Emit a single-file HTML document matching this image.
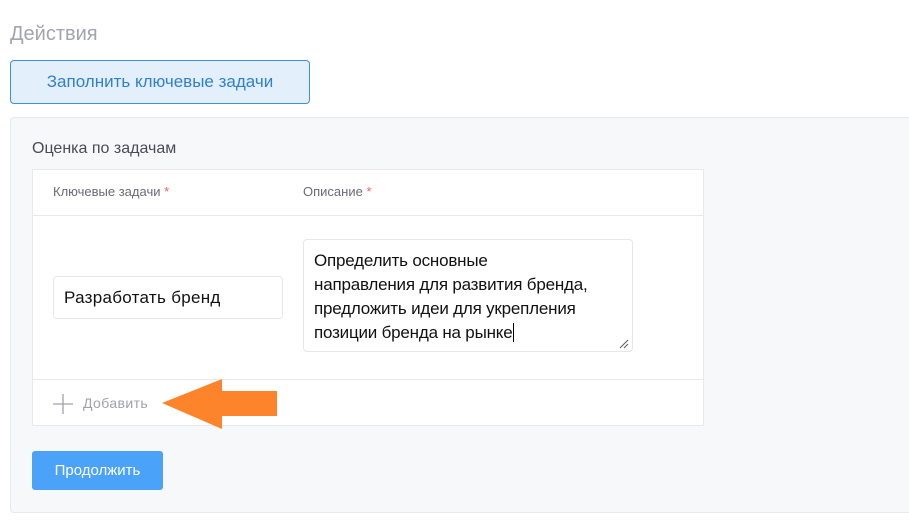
<!DOCTYPE html>
<html><head><meta charset="utf-8"><style>
*{box-sizing:border-box;margin:0;padding:0}
body{width:909px;height:521px;background:#fff;font-family:"Liberation Sans","Noto Sans CJK SC",sans-serif;position:relative;overflow:hidden}
.a{position:absolute}
</style></head><body>
<div class="a" style="left:10px;top:23px;font-size:20px;color:#a3a3b3">Действия</div>
<div class="a" style="left:10px;top:60px;width:300px;height:44px;background:#e3f0fc;border:1px solid #3d8fe3;border-radius:4px;color:#2f7fd3;font-size:17px;line-height:42px;text-align:center">Заполнить ключевые задачи</div>
<div class="a" style="left:10px;top:117px;width:910px;height:396px;background:#f7f8fa;border:1px solid #e8e9ed;border-radius:4px"></div>
<div class="a" style="left:32px;top:140px;font-size:16px;color:#4a4a5a">Оценка по задачам</div>
<div class="a" style="left:32px;top:169px;width:672px;height:257px;background:#fff;border:1px solid #e8e9ed"></div>
<div class="a" style="left:33px;top:215px;width:670px;height:1px;background:#e8e9ed"></div>
<div class="a" style="left:33px;top:379px;width:670px;height:1px;background:#e8e9ed"></div>
<div class="a" style="left:53px;top:184px;font-size:13px;color:#6a6a7a">Ключевые задачи <span style="color:#f06060">*</span></div>
<div class="a" style="left:303px;top:184px;font-size:13px;color:#6a6a7a">Описание <span style="color:#f06060">*</span></div>
<div class="a" style="left:53px;top:276px;width:230px;height:43px;border:1px solid #e6e7eb;border-radius:4px;font-size:17px;line-height:41px;padding-left:10px;color:#111;letter-spacing:0.3px">Разработать бренд</div>
<div class="a" style="left:303px;top:239px;width:330px;height:113px;border:1px solid #e6e7eb;border-radius:4px;font-size:17px;line-height:24px;padding:9px 10px;color:#111;white-space:nowrap;letter-spacing:-0.2px">Определить основные<br>направления для развития бренда,<br>предложить идеи для укрепления<br>позиции бренда на рынке<span style="border-left:1px solid #000;margin-left:1px"></span></div>
<svg class="a" style="left:619px;top:339px" width="10" height="10"><path d="M1 9L9 1M5 9L9 5" stroke="#666" stroke-width="1.2"/></svg>
<svg class="a" style="left:52px;top:393px" width="22" height="22"><path d="M11 1V21M1 11H21" stroke="#a0a0b0" stroke-width="1.3"/></svg>
<div class="a" style="left:83px;top:395px;font-size:14px;color:#a0a0b0;letter-spacing:0.4px">Добавить</div>
<svg class="a" style="left:160px;top:378px" width="120" height="52"><path d="M2 25L62 1V13H117V38H62V51Z" fill="#fd842a"/></svg>
<div class="a" style="left:32px;top:451px;width:131px;height:39px;background:#4aa3f8;border-radius:3px;color:#fff;font-size:15px;line-height:39px;text-align:center">Продолжить</div>
</body></html>
